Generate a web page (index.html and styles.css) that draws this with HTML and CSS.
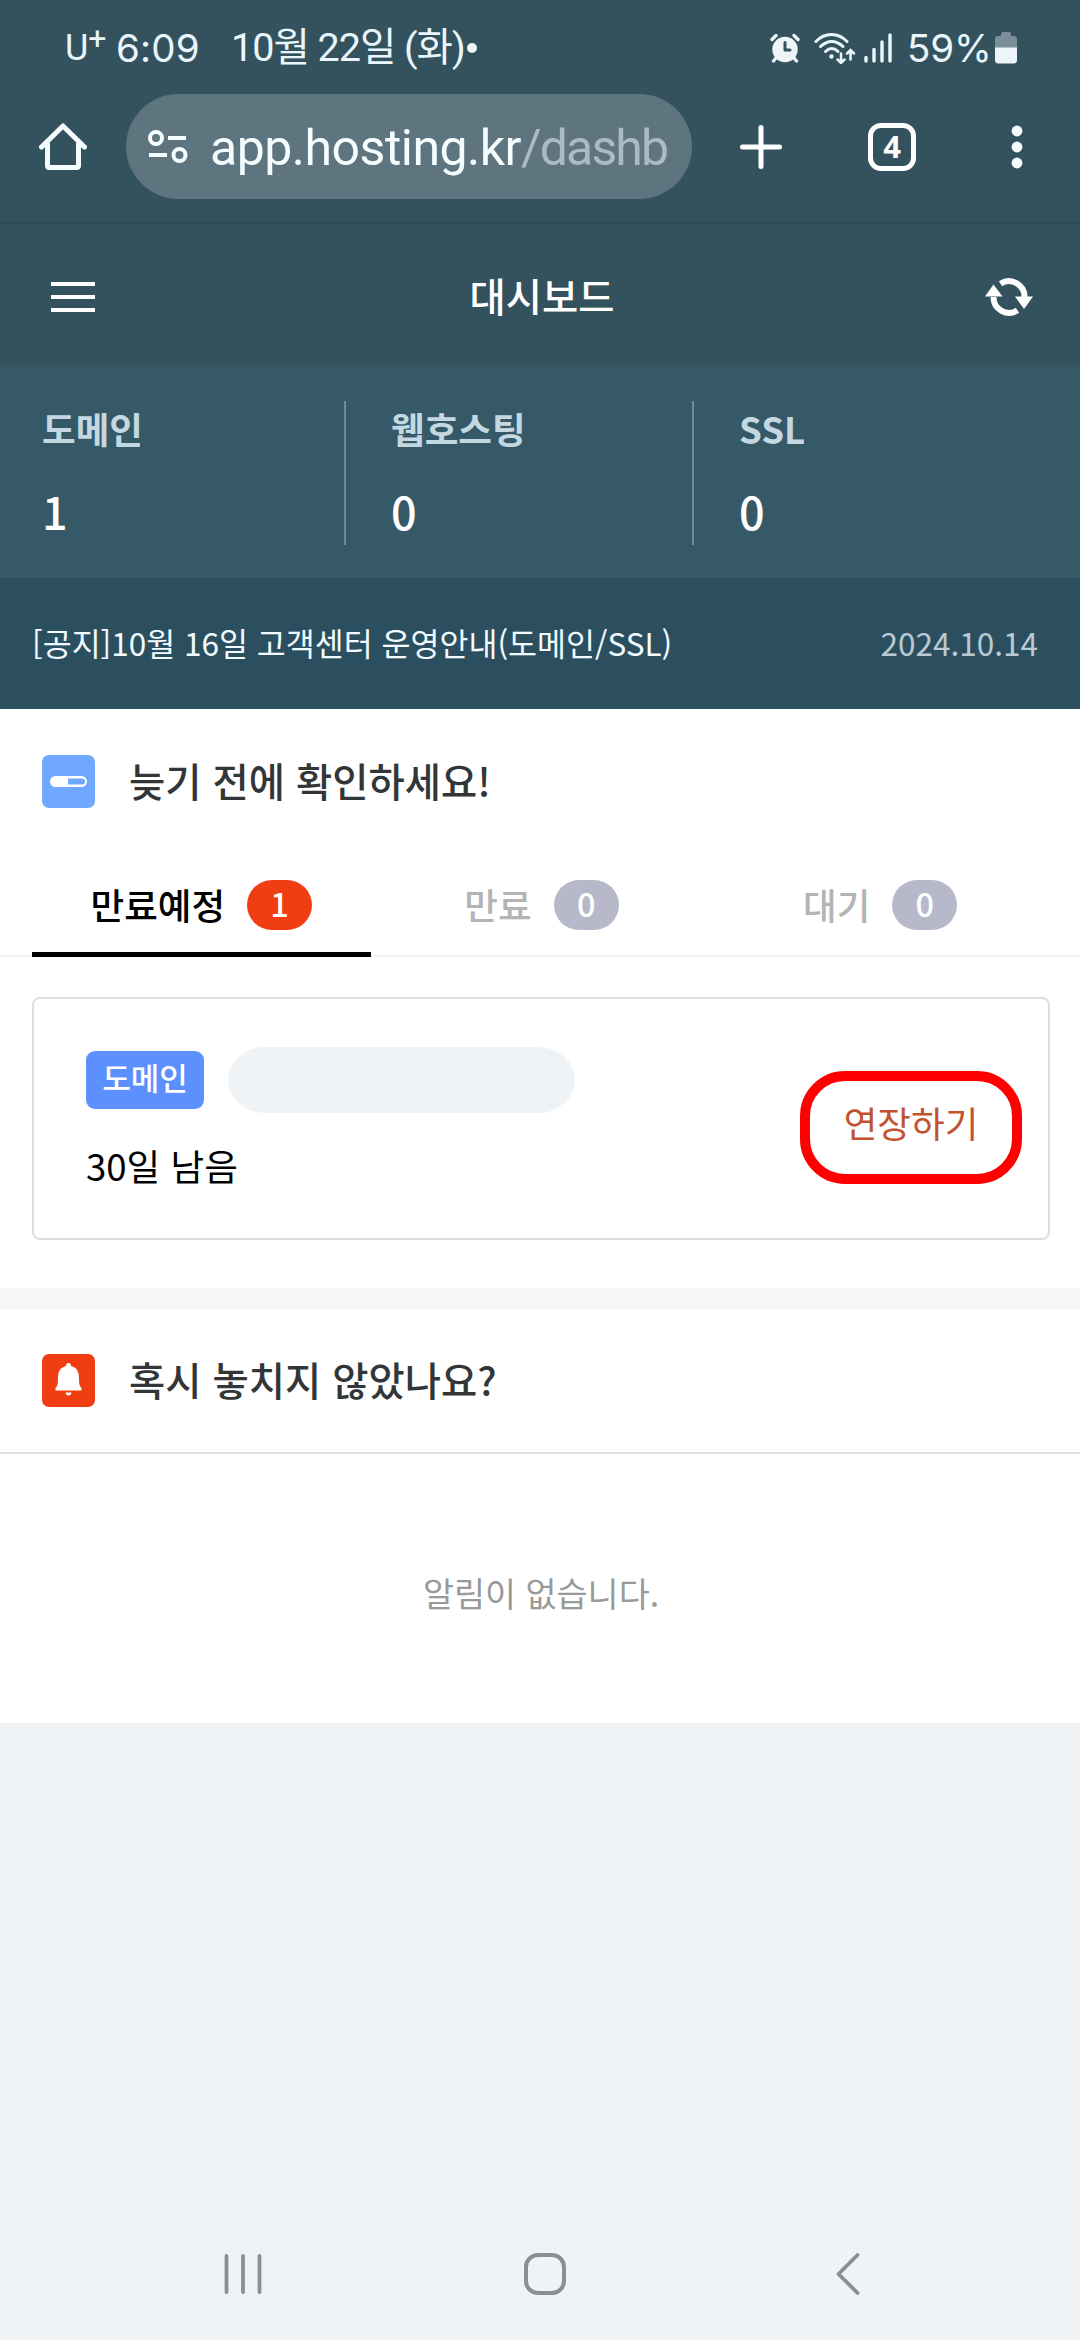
FILE: index.html
```html
<!DOCTYPE html>
<html lang="ko">
<head>
    <meta charset="UTF-8">
    <meta name="viewport" content="width=device-width, initial-scale=1.0">
    <title>대시보드</title>
    <link rel="stylesheet" href="styles.css">
</head>
<body>
    <!-- Phone status bar -->
    <div class="status-bar">
        <span class="carrier">U<sup>+</sup></span>
        <span class="time">6:09</span>
        <span class="date">10월 22일 (화)</span>
        <span class="dot"></span>
        <div class="status-icons">
            <svg class="alarm" width="30" height="30" viewBox="0 0 30 30">
                <circle cx="15" cy="16.5" r="12.7" fill="#edf4f8"/>
                <path d="M2 6.5 6 2.5M28 6.5 24 2.5M6 25l-2.5 3M24 25l2.5 3" stroke="#edf4f8" stroke-width="3.4" stroke-linecap="round"/>
                <path d="M15 9.5V17h5" fill="none" stroke="#34525d" stroke-width="3" stroke-linecap="round" stroke-linejoin="round"/>
            </svg>
            <svg class="wifi" width="42" height="32" viewBox="0 0 42 32">
                <g fill="none" stroke="#e9f6fc" stroke-width="3" stroke-linecap="round">
                    <path d="M2 9.5C11 .2 24 .2 33 9.5"/>
                    <path d="M6.5 14.5c7-6.8 15.5-6.8 22.5 0"/>
                    <path d="M11.5 19.5c4-3.8 8.5-3.8 12.5 0"/>
                    <path d="M27 21.5v9M23.5 27.5l3.5 3.5 3.5-3.5M36.5 27.5v-9M33 21.5l3.5-3.5 3.5 3.5" stroke-width="2.5"/>
                </g>
                <circle cx="17.5" cy="24.5" r="2.2" fill="#e9f6fc"/>
            </svg>
            <svg class="signal" width="28" height="30" viewBox="0 0 28 30">
                <path d="M2 24.5V28M10 16.5V28M18 9v19M26 2v26" stroke="#e9f6fc" stroke-width="3.4" stroke-linecap="round"/>
            </svg>
            <span class="percent">59%</span>
            <svg width="22" height="32" viewBox="0 0 22 32">
                <path d="M6 4V2q0-2 2-2h6q2 0 2 2v2h3q3 0 3 3v9H0V7q0-3 3-3z" fill="#7b9199"/>
                <path d="M0 15.5h22V28q0 3.5-3.5 3.5h-15Q0 31.5 0 28z" fill="#eef5fa"/>
            </svg>
        </div>
    </div>

    <!-- Browser toolbar -->
    <div class="browser-bar">
        <svg class="home" width="48" height="48" viewBox="0 0 48 48">
            <path d="M2.5 24 24 3l21.5 21M8.5 21v21.5q0 2 2 2h27q2 0 2-2V21" fill="none" stroke="#f6fdff" stroke-width="5" stroke-linecap="round" stroke-linejoin="round"/>
        </svg>
        <div class="address">
            <svg width="40" height="34" viewBox="0 0 40 34" fill="none" stroke="#f6fdff" stroke-width="4">
                <circle cx="8" cy="8" r="6"/>
                <path d="M20 8h18M1 25h18"/>
                <circle cx="31.5" cy="25" r="6"/>
            </svg>
            <span class="url">app.hosting.kr<span class="path">/dashb</span></span>
        </div>
        <svg class="new-tab" width="42" height="44" viewBox="0 0 42 44">
            <path d="M21 2.5v39M2.5 22h37" stroke="#fff" stroke-width="5" stroke-linecap="round"/>
        </svg>
        <div class="tab-count">4</div>
        <svg class="more" width="12" height="44" viewBox="0 0 12 44" fill="#f6fdff">
            <circle cx="6" cy="6" r="5.4"/>
            <circle cx="6" cy="22" r="5.4"/>
            <circle cx="6" cy="38" r="5.4"/>
        </svg>
    </div>

    <header class="header">
        <div class="menu"><i></i><i></i><i></i></div>
        <h1>대시보드</h1>
        <svg class="refresh" width="48" height="38" viewBox="0 0 48 38">
            <path d="M15.5 5.8A15.5 15.5 0 0 1 39.5 19M32.5 32.2A15.5 15.5 0 0 1 8.5 19" fill="none" stroke="#fff" stroke-width="6"/>
            <path d="M30 18.5h18L39 31zM0 18.5h17.5L8.5 6.5z" fill="#fff"/>
        </svg>
    </header>

    <section class="stats">
        <div class="stat"><span>도메인</span><strong>1</strong></div>
        <div class="stat"><span>웹호스팅</span><strong>0</strong></div>
        <div class="stat"><span>SSL</span><strong>0</strong></div>
    </section>

    <div class="notice">
        <span class="notice-title">[공지]10월 16일 고객센터 운영안내(도메인/SSL)</span>
        <span class="notice-date">2024.10.14</span>
    </div>

    <!-- Expiring services -->
    <section class="panel expire">
        <div class="panel-title">
            <svg width="53" height="53" viewBox="0 0 53 53">
                <rect width="53" height="53" rx="7" fill="#70a7ff"/>
                <rect x="8" y="21" width="37" height="11" rx="5.5" fill="#fff"/>
                <path d="M26 23.5h14q3 0 3 3t-3 3H26z" fill="#70a7ff"/>
            </svg>
            <h2>늦기 전에 확인하세요!</h2>
        </div>
        <div class="tabs">
            <div class="tab active">만료예정<span class="count">1</span></div>
            <div class="tab">만료<span class="count">0</span></div>
            <div class="tab">대기<span class="count">0</span></div>
        </div>
        <div class="card">
            <div class="card-info">
                <div class="card-name">
                    <span class="tag">도메인</span>
                    <span class="masked"></span>
                </div>
                <p>30일 남음</p>
            </div>
            <a class="extend">연장하기</a>
        </div>
    </section>

    <!-- Notifications -->
    <section class="panel alerts">
        <div class="panel-title">
            <svg width="53" height="53" viewBox="0 0 53 53">
                <rect width="53" height="53" rx="7" fill="#f03d12"/>
                <path d="M26.5 9q2.5 0 2.5 3c6 1.5 8 6 8 12 0 6 .5 8 2.500 10v2.500h-26V34c2-2 2.500-4 2.500-10 0-6 2-10.500 8-12q0-3 2.500-3z" fill="#fff"/>
                <path d="M23.5 38.5h6q-.5 3-3 3t-3-3z" fill="#fff"/>
            </svg>
            <h2>혹시 놓치지 않았나요?</h2>
        </div>
        <p class="empty">알림이 없습니다.</p>
    </section>

    <!-- Phone navigation -->
    <nav class="nav-bar">
        <svg class="recents" width="38" height="42" viewBox="0 0 38 42">
            <path d="M2.5 3v36M19 3v36M35.5 3v36" stroke="#8a908f" stroke-width="3.8" stroke-linecap="round"/>
        </svg>
        <svg width="42" height="42" viewBox="0 0 42 42">
            <rect x="2" y="2" width="38" height="38" rx="12" fill="none" stroke="#8a908f" stroke-width="4"/>
        </svg>
        <svg class="back" width="24" height="42" viewBox="0 0 24 42">
            <path d="M21.5 2 2.5 21l19 19" fill="none" stroke="#8a908f" stroke-width="3.8" stroke-linecap="round" stroke-linejoin="round"/>
        </svg>
    </nav>
</body>
</html>
```
FILE: styles.css
```css
* {
    box-sizing: border-box;
}
body {
    margin: 0;
    min-height: 2340px;
    display: flex;
    flex-direction: column;
    background-color: #eff3f6;
    font-family: "Noto Sans CJK KR", sans-serif;
    color: #000;
}
h1,
h2,
p {
    margin: 0;
}
svg {
    display: block;
    flex: none;
}

/* status bar */
.status-bar {
    height: 95px;
    padding: 0 63px 0 65px;
    display: flex;
    align-items: center;
    background-color: #34525d;
    color: #e9f6fc;
    font-family: Roboto, "Noto Sans CJK KR", sans-serif;
    font-size: 39.5px;
    line-height: 98px;
    white-space: nowrap;
}
.carrier {
    width: 51px;
    font-size: 36px;
    font-weight: 400;
}
.carrier sup {
    font-size: 32px;
    line-height: 0;
    vertical-align: 11px;
}
.time {
    width: 115px;
    font-family: Inter, sans-serif;
    font-size: 38.5px;
    letter-spacing: 0.2px;
}
.date {
    width: 236px;
    letter-spacing: -1px;
}
.dot {
    width: 10px;
    height: 10px;
    flex: none;
    border-radius: 50%;
    background-color: #edf4f8;
}
.status-icons {
    margin-left: auto;
    display: flex;
    align-items: center;
}
.alarm {
    margin-right: 14px;
}
.wifi {
    margin-right: 8px;
}
.signal {
    margin-right: 15px;
}
.percent {
    width: 88px;
    font-family: Inter, sans-serif;
    font-size: 38.5px;
    letter-spacing: -0.2px;
}

/* browser toolbar */
.browser-bar {
    height: 129px;
    padding: 0 57px 24px 39px;
    display: flex;
    align-items: center;
    background-color: #34525d;
    border-bottom: 2px solid #2d4b57;
}
.home {
    margin-right: 39px;
}
.address {
    width: 566px;
    height: 105px;
    padding-left: 22px;
    display: flex;
    align-items: center;
    gap: 22px;
    border-radius: 53px;
    background-color: #5e747e;
}
.url {
    padding-top: 2px;
    font-family: Roboto, sans-serif;
    font-size: 50px;
    letter-spacing: -0.5px;
    color: #f6fdff;
}
.path {
    letter-spacing: -1.9px;
    color: #a9bcc5;
}
.new-tab {
    margin-left: 48px;
}
.tab-count {
    width: 48px;
    height: 48px;
    margin-left: 86px;
    border: 5px solid #fff;
    border-radius: 13px;
    color: #fff;
    font: bold 31px/37px "Noto Sans", sans-serif;
    text-align: center;
}
.more {
    margin-left: auto;
}

/* page header */
.header {
    height: 146px;
    padding: 0 47px 0 51px;
    display: flex;
    align-items: center;
    justify-content: space-between;
    background: linear-gradient(#34525d 140px, #355967);
}
.menu {
    width: 48px;
    display: flex;
    flex-direction: column;
    gap: 9px;
}
.menu i {
    width: 44px;
    height: 4px;
    background-color: #fff;
}
.header h1 {
    padding-bottom: 5px;
    font-size: 39.4px;
    font-weight: 500;
    line-height: 58px;
    color: #fff;
}

/* service counts */
.stats {
    height: 208px;
    padding: 31px 0 33px;
    display: flex;
    background-color: #355967;
}
.stat {
    width: 348px;
    padding-left: 45px;
    display: flex;
    flex-direction: column;
    border-right: 2px solid #6e8c97;
}
.stat:first-child {
    width: 346px;
    padding-left: 42px;
}
.stat:last-child {
    border-right: none;
}
.stat span {
    font-size: 36.6px;
    font-weight: 700;
    line-height: 56px;
    color: #c4d8e2;
}
.stat strong {
    margin-top: 21px;
    font-size: 45px;
    font-weight: 500;
    line-height: 66px;
    color: #fff;
}

.notice {
    height: 131px;
    padding: 0 42px 3px 32px;
    display: flex;
    align-items: center;
    justify-content: space-between;
    background-color: #2c4f5f;
    font-size: 31.5px;
    color: #f2fbff;
}
.notice-date {
    color: #b9cad2;
}

/* panels */
.panel {
    background-color: #fff;
}
.panel-title {
    display: flex;
    align-items: center;
    gap: 34px;
    padding-left: 42px;
}
.panel-title h2 {
    padding-bottom: 2px;
    font-size: 39.4px;
    font-weight: 500;
    line-height: 58px;
    color: #333638;
}
.expire {
    height: 579px;
    padding-top: 42px;
}
.tabs {
    height: 105px;
    margin-top: 41px;
    padding: 0 32px;
    display: grid;
    grid-template-columns: repeat(3, 1fr);
    border-bottom: 2px solid #f2f2f4;
}
.tab {
    height: 105px;
    padding-left: 3px;
    display: flex;
    justify-content: center;
    align-items: center;
    gap: 22px;
    font-size: 36.6px;
    font-weight: 500;
    color: #b2b4b6;
}
.tab.active {
    padding: 5px 0 0;
    border-bottom: 5px solid #000;
    color: #000;
}
.count {
    width: 65px;
    height: 50px;
    border-radius: 25px;
    background-color: #b8b8cb;
    color: #fff;
    font-size: 32.5px;
    font-weight: 500;
    line-height: 45px;
    text-align: center;
}
.active .count {
    background-color: #f03d12;
}
.card {
    height: 243px;
    margin: 40px 30px 0 32px;
    padding: 48px 26px 0 52px;
    display: flex;
    justify-content: space-between;
    align-items: flex-start;
    border: 2px solid #dedede;
    border-radius: 8px;
}
.card-name {
    display: flex;
    align-items: center;
    gap: 24px;
}
.tag {
    width: 118px;
    height: 58px;
    border-radius: 9px;
    background-color: #5c90ff;
    color: #fff;
    font-size: 31px;
    font-weight: 500;
    line-height: 52px;
    text-align: center;
}
.masked {
    width: 347px;
    height: 66px;
    border-radius: 37px / 33px;
    background-color: #eff3f6;
}
.card p {
    margin-top: 26px;
    font-size: 36.6px;
    line-height: 54px;
}
.extend {
    width: 222px;
    height: 113px;
    margin-top: 24px;
    border: 10px solid #fe0000;
    border-radius: 45px;
    color: #c25331;
    font-size: 36.6px;
    line-height: 84px;
    text-align: center;
}
.alerts {
    height: 435px;
    border-top: 22px solid #f4f6f8;
}
.alerts .panel-title {
    height: 144px;
    padding-bottom: 2px;
    border-bottom: 2px solid #dedfe0;
}
.empty {
    padding: 114px 0 0 2px;
    text-align: center;
    font-size: 33.75px;
    line-height: 50px;
    color: #999;
}

/* phone navigation */
.nav-bar {
    height: 132px;
    margin-top: auto;
    padding-left: 224px;
    display: flex;
    align-items: center;
}
.recents {
    margin-right: 262px;
}
.back {
    margin-left: 270px;
}
```
